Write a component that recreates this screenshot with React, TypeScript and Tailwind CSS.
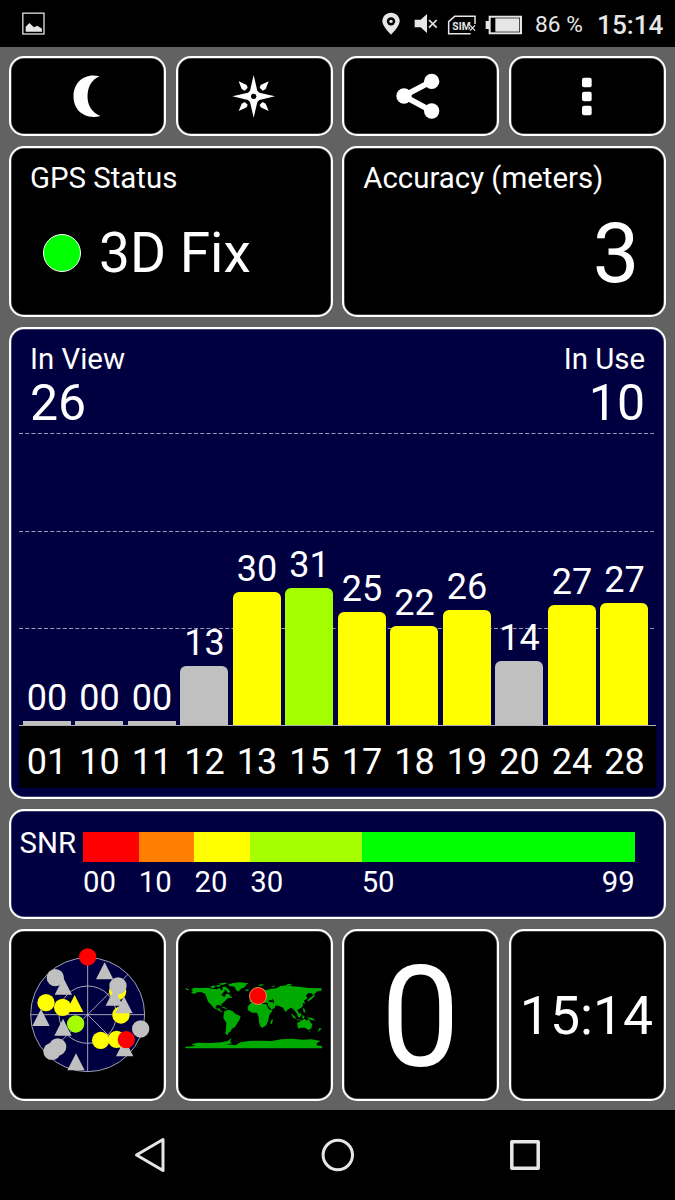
import type { ReactNode } from "react";

type Satellite = {
  id: string;
  snr: string;
  height: number;
  color: string;
};

const GREY = "bg-[#c0c0c0]";
const YELLOW = "bg-[#ffff00]";
const LIME = "bg-[#a6ff00]";

const satellites: Satellite[] = [
  { id: "01", snr: "00", height: 4, color: GREY },
  { id: "10", snr: "00", height: 4, color: GREY },
  { id: "11", snr: "00", height: 4, color: GREY },
  { id: "12", snr: "13", height: 59, color: GREY },
  { id: "13", snr: "30", height: 133, color: YELLOW },
  { id: "15", snr: "31", height: 137, color: LIME },
  { id: "17", snr: "25", height: 113, color: YELLOW },
  { id: "18", snr: "22", height: 99, color: YELLOW },
  { id: "19", snr: "26", height: 115, color: YELLOW },
  { id: "20", snr: "14", height: 64, color: GREY },
  { id: "24", snr: "27", height: 120, color: YELLOW },
  { id: "28", snr: "27", height: 122, color: YELLOW },
];

const Card = ({ className = "", children }: { className?: string; children: ReactNode }) => (
  <div className={`rounded-[15px] border-2 border-white inset-shadow-[0_0_0_0.5px_#ffffff80] ${className}`}>
    {children}
  </div>
);

const StatusBar = () => (
  <div className="flex h-[47px] items-center bg-black text-[#e6e6e6]">
    <svg className="ml-[22px] size-[23px]" viewBox="66 36 69 69">
      <rect x="68.5" y="39.5" width="63.5" height="62.5" fill="none" stroke="#dedede" strokeWidth="4" />
      <path d="M77 95V80L88 69L102 82L112 77L126 86V95Z" fill="#e6e6e6" />
    </svg>

    {/* location */}
    <svg className="ml-[337px] h-[23px] w-[18px]" viewBox="140 37 54 69">
      <path d="M167 39C152 39 141 50 141 65C141 81 167 105 167 105S193 81 193 65C193 50 182 39 167 39Z" fill="#e6e6e6" />
      <circle cx="167" cy="65" r="12.5" fill="#000" />
      <circle cx="167" cy="65" r="5" fill="#e6e6e6" />
    </svg>

    {/* muted */}
    <svg className="ml-[14px] h-[23px] w-[24px]" viewBox="236 37 72 69">
      <path d="M238 60H256L275 43V100L256 83H238Z" fill="#e6e6e6" />
      <path d="M281 61L304 84M304 61L281 84" stroke="#e6e6e6" strokeWidth="5" />
    </svg>

    {/* no sim */}
    <svg className="ml-[9px] h-[23px] w-[30px]" viewBox="334 37 90 69">
      <path d="M418 73V50H357L339 66V102H405" fill="none" stroke="#e6e6e6" strokeWidth="4.5" />
      <text
        x="350"
        y="90"
        fontFamily="Roboto, sans-serif"
        fontSize="34"
        fontWeight="700"
        fill="#e6e6e6"
        textLength="55"
        lengthAdjust="spacingAndGlyphs"
      >
        SIM
      </text>
      <path d="M403 77L418 93M418 77L403 93" stroke="#000" strokeWidth="9" />
      <path d="M403 77L418 93M418 77L403 93" stroke="#e6e6e6" strokeWidth="4" />
    </svg>

    {/* battery */}
    <svg className="ml-[8px] h-[23px] w-[37px]" viewBox="450 37 111 69">
      <path d="M452 64H461V48H561V104H461V88H452Z" fill="#e6e6e6" />
      <rect x="467" y="54" width="88" height="44" fill="#000" />
      <rect x="481" y="56" width="72" height="40" fill="#e6e6e6" />
    </svg>

    <span className="mt-[2px] ml-[13px] w-[62px] text-[22.7px] leading-[26px] whitespace-nowrap">86 %</span>
    <span className="mt-[2px] text-[26.2px] leading-[26px] font-medium whitespace-nowrap">15:14</span>
  </div>
);

const Toolbar = () => (
  <div className="grid h-[80px] grid-cols-4 gap-[9.5px]">
    <Card className="flex items-center justify-center bg-black">
      <svg className="size-[50px] shrink-0" viewBox="187.5 213 150 150">
        <path
          d="M297 229C250 218 219 249 219 289C219 330 251 360 300 348C274 338 261 316 261 289C261 262 273 239 297 229Z"
          fill="#fff"
        />
      </svg>
    </Card>
    <Card className="flex items-center justify-center bg-black">
      <svg className="size-[50px] shrink-0" viewBox="687 213 150 150" fill="#fff">
        <path d="M761 225L772 272L778 278L825 289L778 300L772 306L761 353L750 306L744 300L697 289L744 278L750 272Z" />
        <circle cx="761" cy="289" r="8" fill="#000" />
        <path d="M806 244L797 267L788 272L779 263L782 255Z" />
        <path d="M716 244L725 267L734 272L743 263L740 255Z" />
        <path d="M806 333L797 311L788 306L779 314L782 322Z" />
        <path d="M716 333L725 311L734 306L743 314L740 322Z" />
      </svg>
    </Card>
    <Card className="flex items-center justify-center bg-black">
      <svg className="size-[50px] shrink-0" viewBox="182 213 150 150" fill="#fff">
        <path d="M289 244L205 288L289 333" fill="none" stroke="#fff" strokeWidth="17" />
        <circle cx="206" cy="288" r="23" />
        <circle cx="289" cy="244" r="23" />
        <circle cx="289" cy="333" r="23" />
      </svg>
    </Card>
    <Card className="flex items-center justify-center bg-black">
      <svg className="size-[50px] shrink-0" viewBox="681 213 150 150" fill="#fff">
        <rect x="741" y="233" width="29" height="29" rx="6" />
        <rect x="741" y="275" width="29" height="29" rx="6" />
        <rect x="741" y="317" width="29" height="29" rx="6" />
      </svg>
    </Card>
  </div>
);

const FixStatus = () => (
  <div className="grid h-[171px] grid-cols-2 gap-[9.5px]">
    <Card className="bg-black pt-[16px] pl-[19px]">
      <div className="text-[29.4px] leading-[29px]">GPS Status</div>
      <div className="mt-[19px] flex h-[82px] items-center">
        <div className="ml-[13px] size-[38px] rounded-full border border-white bg-[#00ff00]" />
        <div className="ml-[18px] text-[55px] leading-[54px]">3D Fix</div>
      </div>
    </Card>
    <Card className="bg-black pt-[16px] pr-[24.5px] pl-[19px]">
      <div className="text-[29.4px] leading-[29px]">Accuracy (meters)</div>
      <div className="mt-[20px] text-right text-[83px] leading-[82px]">3</div>
    </Card>
  </div>
);

const GridLine = ({ className }: { className: string }) => (
  <svg className={`absolute left-[8px] h-px w-[635px] ${className}`}>
    <line x1="0" y1="0.5" x2="635" y2="0.5" stroke="#9a9ab8" strokeDasharray="4 2.25" />
  </svg>
);

const SignalChart = () => (
  <Card className="relative flex h-[472px] flex-col bg-[#000040] px-[8px] pb-[9px]">
    <GridLine className="top-[104px]" />
    <GridLine className="top-[202px]" />
    <GridLine className="top-[299px]" />

    <div className="flex justify-between px-[11px] pt-[16px]">
      <div>
        <div className="text-[29.4px] leading-[29px]">In View</div>
        <div className="mt-[4px] text-[50px] leading-[51px]">26</div>
      </div>
      <div className="text-right">
        <div className="text-[29.4px] leading-[29px]">In Use</div>
        <div className="mt-[4px] text-[50px] leading-[51px]">10</div>
      </div>
    </div>

    <div className="relative flex flex-1 items-end gap-[4.5px] border-b border-[#b0b0b0] pl-[3.5px]">
      {satellites.map((sat) => (
        <div key={sat.id} className="w-[48px] shrink-0">
          <div className="mb-[5px] pl-px text-center text-[36px] leading-[36px]">{sat.snr}</div>
          <div
            className={`w-full ${sat.height > 10 ? "rounded-t-[6px]" : ""} ${sat.color}`}
            style={{ height: sat.height }}
          />
        </div>
      ))}
    </div>
    <div className="flex h-[62px] items-center gap-[4.5px] bg-black pt-[9px] pl-[3.5px]">
      {satellites.map((sat) => (
        <div key={sat.id} className="w-[48px] shrink-0 pl-px text-center text-[36px] leading-[36px]">
          {sat.id}
        </div>
      ))}
    </div>
  </Card>
);

const SnrLegend = () => (
  <Card className="flex h-[110px] bg-[#000040] pt-[21px] pl-[8.5px]">
    <div className="w-[63.5px] text-[29.4px] leading-[23px]">SNR</div>
    <div className="w-[551.7px]">
      <div className="grid h-[30px] grid-cols-[10fr_10fr_10fr_20fr_49fr]">
        <div className="bg-[#ff0000]" />
        <div className="bg-[#ff8000]" />
        <div className="bg-[#ffff00]" />
        <div className="bg-[#a6ff00]" />
        <div className="bg-[#00ff00]" />
      </div>
      <div className="mt-[5px] grid grid-cols-[10fr_10fr_10fr_20fr_49fr] text-[29.3px] leading-[30px]">
        <span>00</span>
        <span>10</span>
        <span>20</span>
        <span>30</span>
        <div className="flex justify-between">
          <span>50</span>
          <span>99</span>
        </div>
      </div>
    </div>
  </Card>
);

const Dot = ({ x, y, fill }: { x: number; y: number; fill: string }) => <circle cx={x} cy={y} r="26" fill={fill} />;

const Triangle = ({ x, y, fill }: { x: number; y: number; fill: string }) => (
  <path d="M0 -26L26 25H-26Z" transform={`translate(${x} ${y})`} fill={fill} />
);

const SkyPlot = () => (
  <svg className="size-[133.3px] shrink-0" viewBox="32 70 400 400">
    <circle cx="232" cy="270" r="171" fill="#000040" />
    <g fill="none" stroke="#c0c0d0" strokeWidth="2.5">
      <circle cx="232" cy="270" r="171" />
      <circle cx="232" cy="270" r="86" />
      <path d="M232 99V441M61 270H403M353 149L111 391M232 270L353 391" />
    </g>
    <Triangle x={283} y={139} fill="#c0c0c0" />
    <Dot x={135} y={159} fill="#c0c0c0" />
    <Triangle x={159} y={185} fill="#c0c0c0" />
    <Dot x={107} y={234} fill="#ff0" />
    <Dot x={157} y={248} fill="#ff0" />
    <Triangle x={193} y={237} fill="#ff0" />
    <Triangle x={92} y={279} fill="#c0c0c0" />
    <Triangle x={158} y={308} fill="#c0c0c0" />
    <Dot x={196} y={298} fill="#a6ff00" />
    <Dot x={142} y={367} fill="#c0c0c0" />
    <Dot x={125} y={380} fill="#c0c0c0" />
    <Triangle x={197} y={412} fill="#c0c0c0" />
    <Dot x={322} y={200} fill="#ff0" />
    <Triangle x={312} y={218} fill="#c0c0c0" />
    <Dot x={323} y={184} fill="#c0c0c0" />
    <Dot x={332} y={271} fill="#ff0" />
    <Triangle x={341} y={241} fill="#c0c0c0" />
    <Dot x={391} y={313} fill="#c0c0c0" />
    <Dot x={271} y={347} fill="#ff0" />
    <Dot x={319} y={344} fill="#ff0" />
    <Triangle x={343} y={370} fill="#c0c0c0" />
    <Dot x={348} y={345} fill="#ff0000" />
    <Dot x={232} y={97} fill="#ff0000" />
  </svg>
);

const WorldMap = () => (
  <svg className="mt-px mr-px h-[68.3px] w-[137.3px] shrink-0" viewBox="30 65 412 205">
    <g fill="#00aa00">
      {/* north america */}
      <path d="M30 86L40 89L43 93L34 91ZM49 91L56 85L75 86L95 85L112 88L125 90L133 85L138 93L146 89L150 96L143 101L139 108L149 113L153 103L161 104L166 109L173 115L161 116L153 121L148 128L140 133L139 142L135 137L126 137L121 143L126 149L133 146L135 152L143 158L139 159L129 152L117 147L109 137L99 127L94 112L90 103L80 99L68 98L58 104L48 100L54 96Z" />
      <path d="M105 82L117 78L122 84L111 87ZM124 78L136 76L137 81L126 83ZM141 83L151 82L161 90L166 98L159 101L153 93L145 91ZM128 73L150 70L158 72L142 77ZM137 142L148 143L158 149L151 148Z" />
      {/* greenland, iceland */}
      <path d="M158 76L174 71L195 69L220 72L213 77L210 83L198 88L190 97L183 92L179 82L164 80ZM210 91L220 90L221 94L213 95Z" />
      {/* south america */}
      <path d="M148 156L160 151L172 155L181 163L197 171L193 183L187 191L181 202L171 208L166 217L160 221L159 227L151 224L153 207L154 190L145 177L146 166Z" />
      {/* africa */}
      <path d="M218 142L228 130L245 128L260 134L275 135L281 149L293 153L283 167L280 184L273 199L262 205L256 201L252 188L251 174L246 160L231 160L219 153ZM290 181L294 180L291 194L285 192Z" />
      {/* eurasia */}
      <path d="M224 128L225 119L233 117L229 109L240 106L239 97L250 88L262 87L272 93L290 88L305 87L316 80L340 77L352 81L372 82L400 86L441 87L438 95L427 96L421 102L413 109L412 101L399 102L393 109L398 117L387 124L391 134L384 130L383 142L373 149L367 151L373 163L371 170L362 158L357 151L349 145L340 150L332 158L324 145L314 141L302 138L299 146L287 152L278 137L280 131L267 130L263 123L257 130L246 119L235 128Z" />
      <path d="M225 106L231 101L234 112L227 114ZM248 77L262 75L268 77L257 80ZM289 83L299 78L297 83ZM334 75L347 73L351 77L338 77Z" />
      <path d="M398 122L407 114L418 107L421 109L407 121L399 127Z" />
      <path d="M347 161L359 170L364 180L355 175ZM364 180L380 182V184L365 182ZM366 167L377 160L380 168L372 176ZM383 146L389 149L392 162L386 157ZM382 168L389 170L387 178L382 176ZM395 172L412 176L422 184L407 181Z" />
      {/* oceania */}
      <path d="M366 192L379 184L389 178L396 184L402 177L405 187L412 195L409 208L400 212L390 205L379 205L370 208ZM402 214H407L404 218ZM434 205L440 209L433 214L427 219L430 213Z" />
      {/* antarctica */}
      <path d="M31 262L62 260L49 255L67 250L105 251L139 249L158 245L170 236L165 247L172 252L154 255L181 258L197 249L221 245L262 244L292 245L318 240L352 238L383 241L410 240L436 245L426 252L425 258L441 260V267H31Z" />
    </g>
    <path d="M279 126L287 121L294 125L289 129ZM292 116L297 124L296 133L292 127ZM277 138L289 150L287 153L275 139Z" fill="#000" />
    <circle cx="249" cy="110" r="25.5" fill="#ff0000" stroke="#e0b050" strokeWidth="2.5" />
  </svg>
);

const Widgets = () => (
  <div className="grid h-[172px] grid-cols-4 gap-[9.5px]">
    <Card className="flex items-center justify-center bg-black">
      <SkyPlot />
    </Card>
    <Card className="flex items-center justify-center bg-black">
      <WorldMap />
    </Card>
    <Card className="flex items-center justify-center bg-black">
      <span className="pt-[5px] pr-px text-[141px] leading-[141px]">0</span>
    </Card>
    <Card className="flex items-center justify-center bg-black">
      <span className="pt-px pr-[2px] text-[53.5px] leading-[54px]">15:14</span>
    </Card>
  </div>
);

const NavBar = () => (
  <div className="flex h-[90px] items-center justify-center gap-[151.5px] bg-black">
    <svg className="size-[36px]" viewBox="0 0 36 36" fill="none" stroke="#e6e6e6" strokeWidth="3" strokeLinejoin="round">
      <path d="M31 2.5V33.5L4.5 18Z" />
    </svg>
    <svg className="size-[36px]" viewBox="0 0 36 36" fill="none" stroke="#e6e6e6" strokeWidth="3">
      <circle cx="17.8" cy="18" r="14.7" />
    </svg>
    <svg className="size-[36px]" viewBox="0 0 36 36" fill="none" stroke="#e6e6e6" strokeWidth="3.5" strokeLinejoin="round">
      <rect x="4.8" y="4.8" width="26.4" height="26.4" />
    </svg>
  </div>
);

const App = () => (
  <div className="flex h-[1200px] w-[675px] flex-col overflow-hidden bg-[#626262] font-[Roboto,sans-serif] text-white">
    <StatusBar />
    <div className="flex flex-1 flex-col gap-[10px] px-[9px] pt-[9px]">
      <Toolbar />
      <FixStatus />
      <SignalChart />
      <SnrLegend />
      <Widgets />
    </div>
    <NavBar />
  </div>
);

export default App;
